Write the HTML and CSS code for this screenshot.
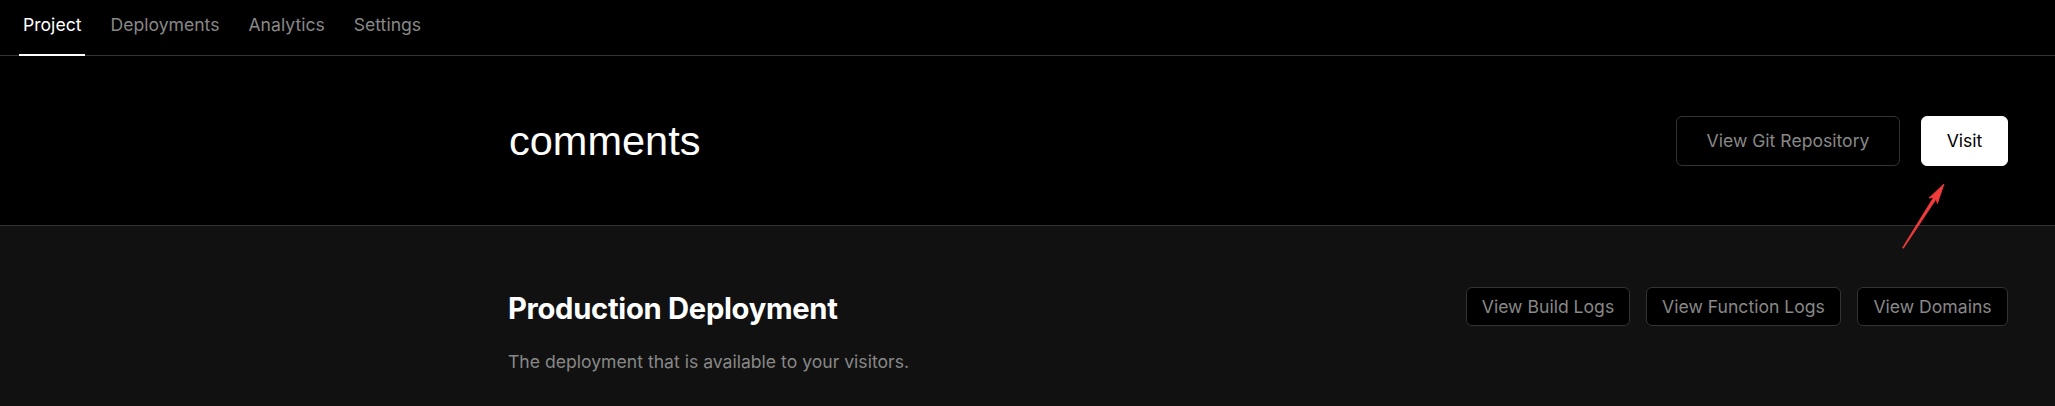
FILE: index.html
```html
<!DOCTYPE html>
<html lang="en">
<head>
<meta charset="utf-8">
<title>comments</title>
<link rel="stylesheet" href="styles.css">
</head>
<body>
<nav class="tabs">
  <a class="tab active">Project</a>
  <a class="tab">Deployments</a>
  <a class="tab">Analytics</a>
  <a class="tab">Settings</a>
</nav>
<header class="hero">
  <div class="container hero-row">
    <h1 class="title">comments</h1>
    <div class="actions">
      <a class="btn btn-outline btn-lg">View Git Repository</a>
      <a class="btn btn-white btn-lg visit">Visit
        <svg class="arrow" width="60" height="80" viewBox="0 0 60 80">
          <path d="M2.6 70.7 L33.5 20.5 L29 21.1 L44 7 L37.4 26.5 L36.1 22.1 L3.4 71.3 Z" fill="#f23c3c" stroke="#f23c3c" stroke-width="0.8" stroke-linejoin="round"/>
        </svg>
      </a>
    </div>
  </div>
</header>
<section class="prod">
  <div class="container">
    <div class="prod-row">
      <h2 class="prod-title">Production Deployment</h2>
      <div class="actions small">
        <a class="btn btn-outline btn-sm w-build">View Build Logs</a>
        <a class="btn btn-outline btn-sm w-func">View Function Logs</a>
        <a class="btn btn-outline btn-sm w-dom">View Domains</a>
      </div>
    </div>
    <p class="prod-sub">The deployment that is available to your visitors.</p>
  </div>
</section>
</body>
</html>
```

FILE: styles.css
```css
* { box-sizing: border-box; }
html, body {
  margin: 0;
  padding: 0;
  background: #111;
  font-family: Inter, "Noto Sans", sans-serif;
  color: #fff;
}
.tabs {
  display: flex;
  align-items: center;
  gap: 21px;
  height: 56px;
  padding: 0 0 1px 19px;
  background: #000;
  border-bottom: 1px solid #333;
}
.tab {
  position: relative;
  display: flex;
  align-items: center;
  height: 55px;
  padding: 0 4px 6px;
  font-size: 17.6px;
  color: #888;
  cursor: pointer;
}
.tab.active { color: #fff; }
.tab.active::after {
  content: "";
  position: absolute;
  left: 0;
  right: 0;
  bottom: -1px;
  height: 2px;
  background: #fff;
}
.container {
  margin-left: 508px;
  width: 1500px;
}
.hero {
  background: #000;
  border-bottom: 1px solid #333;
  height: 170px;
  display: flex;
  align-items: center;
}
.hero-row {
  display: flex;
  align-items: center;
  justify-content: space-between;
}
.title {
  margin: 0;
  font-family: "Liberation Sans", Arial, sans-serif;
  font-weight: 400;
  font-size: 41.5px;
  padding-left: 1px;
}
.actions {
  display: flex;
  gap: 21px;
}
.actions.small { gap: 16px; }
.btn {
  display: flex;
  align-items: center;
  justify-content: center;
  border-radius: 6px;
  cursor: pointer;
  white-space: nowrap;
}
.btn-lg {
  height: 50px;
  font-size: 17.6px;
}
.btn-outline {
  background: #000;
  border: 1px solid #333;
  color: #888;
}
.btn-lg.btn-outline { width: 224px; }
.btn-white {
  background: #fff;
  color: #000;
  width: 87px;
  border: 1px solid #fff;
}
.visit { position: relative; }
.arrow {
  position: absolute;
  left: -22px;
  top: 60px;
}
.prod {
  padding-top: 61px;
  height: 180px;
}
.prod-row {
  display: flex;
  align-items: center;
  justify-content: space-between;
}
.prod-title {
  margin: 0;
  font-size: 29.2px;
  font-weight: 700;
  letter-spacing: -0.3px;
  padding-top: 4px;
}
.btn-sm {
  height: 39px;
  font-size: 17.6px;
}
.w-build { width: 164px; }
.w-func { width: 195px; }
.w-dom { width: 151px; }
.prod-sub {
  margin: 25px 0 0;
  font-size: 17.6px;
  color: #888;
}
```
